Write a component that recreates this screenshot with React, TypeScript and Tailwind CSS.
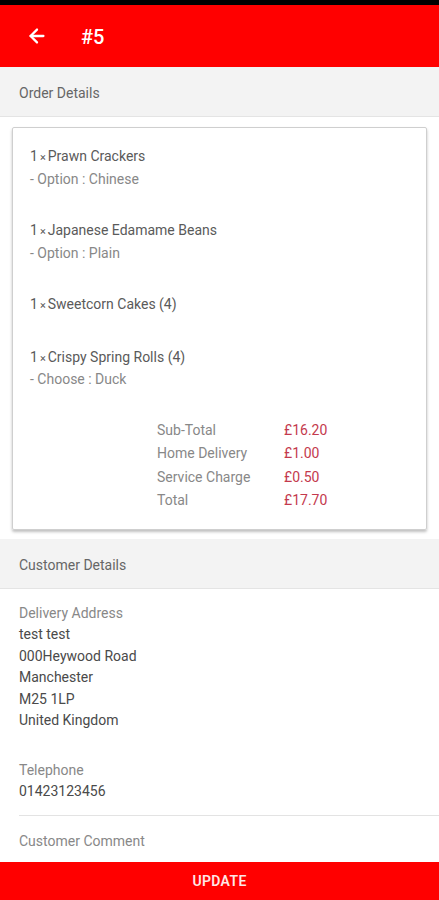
import { ArrowLeft } from "lucide-react";

interface Item {
  qty: number;
  name: string;
  option?: string;
}

const items: Item[] = [
  { qty: 1, name: "Prawn Crackers", option: "- Option : Chinese" },
  { qty: 1, name: "Japanese Edamame Beans", option: "- Option : Plain" },
  { qty: 1, name: "Sweetcorn Cakes (4)" },
  { qty: 1, name: "Crispy Spring Rolls (4)", option: "- Choose : Duck" },
];

const totals = [
  { label: "Sub-Total", value: "£16.20" },
  { label: "Home Delivery", value: "£1.00" },
  { label: "Service Charge", value: "£0.50" },
  { label: "Total", value: "£17.70" },
];

const SectionHeader = ({ title }: { title: string }) => (
  <div className="h-[50px] shrink-0 flex items-center px-[19px] pt-[4px] bg-[#f3f3f3] border-b border-[#e4e4e4] text-[14px] text-[#666]">
    {title}
  </div>
);

const App = () => {
  return (
    <div
      className="h-screen flex flex-col bg-white overflow-hidden"
      style={{ fontFamily: "Roboto, 'Noto Sans', sans-serif" }}
    >
      <div className="h-[5px] bg-black shrink-0" />
      <div className="h-[62px] shrink-0 bg-[#ff0000] flex items-center pl-[26px] gap-[33px] text-white">
        <ArrowLeft size={22} strokeWidth={2.5} />
        <span className="text-[20px] font-medium pt-[2px]">#5</span>
      </div>

      <div className="flex-1 overflow-hidden">
        <SectionHeader title="Order Details" />

        <div className="mx-[12px] mt-[10px] mb-[9px] border border-[#cfcfcf] rounded-[2px] shadow-[0_2px_3px_rgba(0,0,0,0.25)] pt-[18px] pb-[16px] px-[17px]">
          {items.map((item, i) => (
            <div key={i} className="mb-[30px] text-[14px] leading-[21.5px]">
              <div className="text-[#5a5a5a]">
                {item.qty}
                <span className="text-[11px] mx-[2px]">×</span>
                {item.name}
              </div>
              {item.option && <div className="text-[#888]">{item.option}</div>}
            </div>
          ))}

          <div className="ml-[127px] -mt-[2px] text-[14px] leading-[23.5px]">
            {totals.map((t) => (
              <div key={t.label} className="flex">
                <span className="w-[127px] text-[#888]">{t.label}</span>
                <span className="text-[#c4394d]">{t.value}</span>
              </div>
            ))}
          </div>
        </div>

        <SectionHeader title="Customer Details" />

        <div className="pl-[19px] pt-[14px] text-[14px] leading-[21.5px]">
          <div className="text-[#888]">Delivery Address</div>
          <div className="text-[#4a4a4a]">test test</div>
          <div className="text-[#4a4a4a]">000Heywood Road</div>
          <div className="text-[#4a4a4a]">Manchester</div>
          <div className="text-[#4a4a4a]">M25 1LP</div>
          <div className="text-[#4a4a4a]">United Kingdom</div>

          <div className="mt-[28px] text-[#888]">Telephone</div>
          <div className="text-[#4a4a4a]">01423123456</div>

          <div className="mt-[12px] border-t border-[#e3e3e3]" />
          <div className="pt-[15px] text-[#888]">Customer Comment</div>
        </div>
      </div>

      <div className="h-[38px] shrink-0 bg-[#ff0000] flex items-center justify-center text-[14px] font-semibold tracking-wide text-[#ffe6e6]">
        UPDATE
      </div>
    </div>
  );
};

export default App;
